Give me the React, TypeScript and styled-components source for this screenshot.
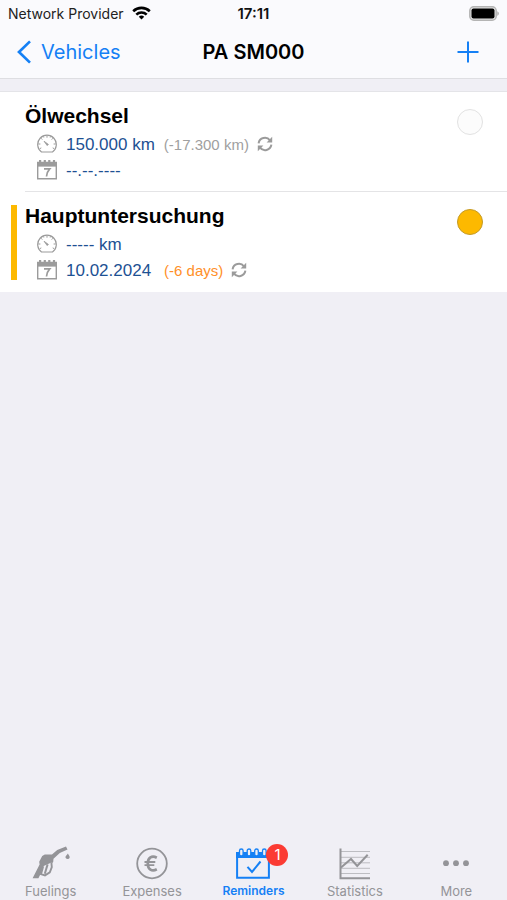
import React from "react";
import styled, { createGlobalStyle } from "styled-components";

const colors = {
  blue: "#1580f5",
  navy: "#1d5193",
  grey: "#949498",
  iconGrey: "#9b9b9b",
  amber: "#fdb900",
  orange: "#ff9029",
  page: "#f0eff5",
  bar: "#fafafd",
};

const GlobalStyle = createGlobalStyle`
  * { box-sizing: border-box; }
  body { margin: 0; background: ${colors.page}; font-family: Inter, sans-serif; }
  button { border: 0; padding: 0; background: none; font: inherit; color: inherit; cursor: pointer; }
  a { color: inherit; text-decoration: none; }
  h1, h2, ul { margin: 0; padding: 0; }
  ul { list-style: none; }
  svg { display: block; flex: none; }
`;

const Screen = styled.div`
  display: flex;
  flex-direction: column;
  min-height: 100vh;
`;

const TopBar = styled.header`
  background: ${colors.bar};
  border-bottom: 1px solid #dedee2;
`;

const StatusBar = styled.div`
  display: grid;
  grid-template-columns: 1fr auto 1fr;
  align-items: center;
  height: 26px;
  padding: 0 8px;
  font-size: 14px;
  color: #222;
`;

const Carrier = styled.div`
  display: flex;
  align-items: center;
  gap: 8px;
`;

const Clock = styled.time`
  font-size: 15px;
  font-weight: 600;
  color: #111;
`;

const BatterySlot = styled.div`
  justify-self: end;
`;

const NavBar = styled.nav`
  display: grid;
  grid-template-columns: 1fr auto 1fr;
  align-items: center;
  height: 52px;
  padding: 0 16px;
`;

const BackLink = styled.a`
  display: flex;
  align-items: center;
  gap: 9px;
  font-size: 20px;
  color: ${colors.blue};
`;

const Title = styled.h1`
  font-size: 20px;
  font-weight: 600;
  color: #000;
`;

const AddButton = styled.button`
  justify-self: end;
  padding: 0 12px;
  color: ${colors.blue};
`;

const List = styled.ul`
  margin-top: 12px;
  border-top: 1px solid #e4e4e8;
  background: #fff;
`;

const Item = styled.li`
  display: flex;
  height: 100px;
  padding-left: 11px;
`;

const DueStripe = styled.span<{ $due: boolean }>`
  width: 6px;
  height: 75px;
  margin: 13px 8px 0 0;
  background: ${(p) => (p.$due ? colors.amber : "transparent")};
`;

const ItemBody = styled.div<{ $divided: boolean }>`
  display: flex;
  flex: 1;
  justify-content: space-between;
  padding: 12px 24px 0 0;
  border-bottom: ${(p) => (p.$divided ? "1px solid #e4e4e6" : "0")};
  font-family: "Liberation Sans", Arial, sans-serif;
`;

const ItemTitle = styled.h2`
  margin-bottom: 3px;
  font-size: 21px;
  line-height: 24px;
  font-weight: 700;
  color: #000;
`;

const Detail = styled.div`
  display: flex;
  align-items: center;
  height: 26px;
  padding-left: 12px;
`;

const Value = styled.span`
  margin: 0 9px;
  font-size: 17px;
  line-height: 18px;
  padding-top: 1px;
  color: ${colors.navy};
`;

const Remaining = styled.span<{ $due: boolean }>`
  margin: 0 8px 0 ${(p) => (p.$due ? "4px" : "0")};
  font-size: 15px;
  color: ${(p) => (p.$due ? colors.orange : "#a0a0a0")};
`;

const StatusDot = styled.button<{ $due: boolean }>`
  width: 26px;
  height: 26px;
  margin-top: 5px;
  border-radius: 50%;
  border: 1px solid ${(p) => (p.$due ? "#c49a25" : "#e2e2e2")};
  background: ${(p) => (p.$due ? colors.amber : "#fcfcfc")};
`;

const TabBar = styled.nav`
  display: grid;
  grid-template-columns: repeat(5, 1fr);
  margin-top: auto;
`;

const Tab = styled.a<{ $active?: boolean }>`
  display: flex;
  flex-direction: column;
  align-items: center;
  gap: 2px;
  padding-bottom: 1px;
  font-size: ${(p) => (p.$active ? "12px" : "13px")};
  line-height: 16px;
  font-weight: ${(p) => (p.$active ? 600 : 400)};
  color: ${(p) => (p.$active ? colors.blue : colors.grey)};
`;

const TabIcon = styled.span`
  position: relative;
`;

const Badge = styled.span`
  position: absolute;
  top: -1px;
  right: -18px;
  width: 22px;
  height: 22px;
  border-radius: 50%;
  background: #fb3b33;
  color: #fff;
  font-size: 15px;
  line-height: 22px;
  font-weight: 400;
  text-align: center;
`;

const WifiIcon = () => (
  <svg width="19" height="14" viewBox="0 0 19 14" fill="none" stroke="#000" strokeWidth="2.6">
    <path d="M1.2 5.2a12 12 0 0 1 16.6 0" />
    <path d="M4.3 8.6a7.5 7.5 0 0 1 10.4 0" />
    <path d="M9.5 13.6 6.8 10.8a3.9 3.9 0 0 1 5.4 0z" fill="#000" stroke="none" />
  </svg>
);

const BatteryIcon = () => (
  <svg width="30" height="15" viewBox="0 0 30 15">
    <rect x=".8" y=".8" width="26.4" height="13.4" rx="4" fill="#e6e6e6" stroke="#b4b4b4" strokeWidth="1.5" />
    <rect x="2.5" y="2.5" width="23" height="10" rx="2" fill="#000" />
    <path d="M28.3 5.2c2 .8 2 3.8 0 4.6z" fill="#aaa" />
  </svg>
);

const ChevronIcon = () => (
  <svg width="16" height="24" viewBox="0 0 16 24" fill="none" stroke="currentColor" strokeWidth="2.7">
    <path d="M14 1.4 3 12l11 10.6" />
  </svg>
);

const PlusIcon = () => (
  <svg width="22" height="22" viewBox="0 0 22 22" stroke="currentColor" strokeWidth="2">
    <path d="M11 .5v21M.5 11h21" />
  </svg>
);

const GaugeIcon = () => (
  <svg width="20" height="20" viewBox="0 0 20 20" fill="none" stroke={colors.iconGrey} strokeWidth="1.2">
    <path d="M4.5 18A9.3 9.3 0 1 1 15.5 18z" strokeLinejoin="round" />
    <path d="M10 1.5v2.2M4 4.2l1.3 1.4M16 4.2l-1.3 1.4M1.3 10h2.1M16.6 10h2.1M2.7 14.7l1.6-.8M17.3 14.7l-1.6-.8M6.2 2.2l.6 1.3M13.8 2.2l-.6 1.3" strokeWidth="1" />
    <path d="m7 7.2 4.4 3.2-1.2 1.2z" fill={colors.iconGrey} strokeWidth=".8" />
  </svg>
);

const CalendarIcon = () => (
  <svg width="20" height="20" viewBox="0 0 20 20">
    <path d="M.7 5.5h18.6v13.3H.7z" fill="#fff" stroke={colors.iconGrey} strokeWidth="1.4" />
    <path d="M0 1.8h2V0h2.2v1.8h2.5V0h2.2v1.8h2.3V0h2.2v1.8h2.5V0h2.2v1.8H20v4.8H0z" fill={colors.iconGrey} />
    <path d="M7 8.9h5.7c-2 2.2-3 4.5-3.2 7.6" fill="none" stroke={colors.iconGrey} strokeWidth="1.7" />
  </svg>
);

const RepeatIcon = () => (
  <svg width="16" height="16" viewBox="0 0 16 16" fill="none" stroke={colors.iconGrey} strokeWidth="2">
    <path d="M1.6 7.3A6.4 6.4 0 0 1 13 4.4M14.4 8.7A6.4 6.4 0 0 1 3 11.6" />
    <path d="M15.2.8v5.6H9.6zM.8 15.2V9.6h5.6z" fill={colors.iconGrey} stroke="none" />
  </svg>
);

const NozzleIcon = () => (
  <svg width="38" height="36" viewBox="0 0 38 36">
    <path d="M.6 33.2 7.6 19.6l-.4-2.8 3-5.8 2.6-1.6 7.2.1 5.2-4.4L34 1.4l1.5 3.2-7.7 3.5-6.3 5.6-.3 3.2-2.4 2.6-6 2.2-3.4 5.6-3 5.9z" fill="currentColor" />
    <path d="m19.4 17.6.4 4.6-2 5.2-4.8 3-4-1.2 2.2-8" fill={colors.page} stroke="currentColor" strokeWidth="1.9" />
    <path d="m15.6 19.4-2.8 9.4" stroke="currentColor" strokeWidth="2" />
    <path d="M35.9 8.4c.5 1.5 2 2.5 1.8 4a2.2 2.2 0 0 1-4.3-.1c-.1-1.5 1.7-2.3 2.5-3.9z" fill="currentColor" />
  </svg>
);

const EuroIcon = () => (
  <svg width="34" height="36" viewBox="0 0 34 36" fill="none" stroke="currentColor">
    <circle cx="17" cy="18.5" r="14.8" strokeWidth="1.8" />
    <path d="M21.8 12.7c-5-2.6-9-.1-9 5.8s4 8.4 9 5.8" strokeWidth="2.7" />
    <path d="M9.5 17h10.8M9.5 20.2h9.8" strokeWidth="1.8" />
  </svg>
);

const ReminderIcon = () => (
  <svg width="34" height="36" viewBox="0 0 34 36" fill="none" stroke="currentColor">
    <path d="M1.1 12v20.8h31.8V12" strokeWidth="2" />
    <path d="M0 7h34v6H0z" fill="currentColor" stroke="none" />
    {[5.3, 13, 20.5, 28.3].map((x) => (
      <rect key={x} x={x - 1.8} y="4" width="3.6" height="7" rx="1.8" fill={colors.page} strokeWidth="1.3" />
    ))}
    <path d="m11.5 21.8 4.5 5.2 8.5-10.5" strokeWidth="2" />
  </svg>
);

const ChartIcon = () => (
  <svg width="32" height="36" viewBox="0 0 32 36" fill="none" stroke="currentColor">
    <path d="M2 6.5h29M2 12.3h29M2 17.8h29M2 23.3h29M2 28.5h29" strokeWidth="1" opacity=".55" />
    <path d="M1.5 3.5v29.8H31" strokeWidth="2" />
    <path d="m2 22.5 10-8.5 6.2 7L28.7 9.8" strokeWidth="2" />
  </svg>
);

const MoreIcon = () => (
  <svg width="28" height="36" viewBox="0 0 28 36" fill="currentColor">
    <circle cx="4" cy="18.2" r="2.9" />
    <circle cx="14" cy="18.2" r="2.9" />
    <circle cx="24" cy="18.2" r="2.9" />
  </svg>
);

type Reminder = {
  title: string;
  distance: string;
  date: string;
  distanceLeft?: string;
  timeLeft?: string;
  due: boolean;
};

const reminders: Reminder[] = [
  { title: "Ölwechsel", distance: "150.000 km", distanceLeft: "(-17.300 km)", date: "--.--.----", due: false },
  { title: "Hauptuntersuchung", distance: "----- km", date: "10.02.2024", timeLeft: "(-6 days)", due: true },
];

const tabs = [
  { label: "Fuelings", Icon: NozzleIcon },
  { label: "Expenses", Icon: EuroIcon },
  { label: "Reminders", Icon: ReminderIcon, badge: 1 },
  { label: "Statistics", Icon: ChartIcon },
  { label: "More", Icon: MoreIcon },
];

function DetailLine({ icon, value, left, due }: { icon: React.ReactNode; value: string; left?: string; due: boolean }) {
  return (
    <Detail>
      {icon}
      <Value>{value}</Value>
      {left && (
        <>
          <Remaining $due={due}>{left}</Remaining>
          <RepeatIcon />
        </>
      )}
    </Detail>
  );
}

export default function App() {
  return (
    <Screen>
      <GlobalStyle />
      <TopBar>
        <StatusBar>
          <Carrier>
            Network Provider
            <WifiIcon />
          </Carrier>
          <Clock>17:11</Clock>
          <BatterySlot>
            <BatteryIcon />
          </BatterySlot>
        </StatusBar>
        <NavBar>
          <BackLink href="#vehicles">
            <ChevronIcon />
            Vehicles
          </BackLink>
          <Title>PA SM000</Title>
          <AddButton aria-label="Add reminder">
            <PlusIcon />
          </AddButton>
        </NavBar>
      </TopBar>
      <List>
        {reminders.map((r, i) => (
          <Item key={r.title}>
            <DueStripe $due={r.due} />
            <ItemBody $divided={i < reminders.length - 1}>
              <div>
                <ItemTitle>{r.title}</ItemTitle>
                <DetailLine icon={<GaugeIcon />} value={r.distance} left={r.distanceLeft} due={r.due} />
                <DetailLine icon={<CalendarIcon />} value={r.date} left={r.timeLeft} due={r.due} />
              </div>
              <StatusDot $due={r.due} aria-label={`Status of ${r.title}`} />
            </ItemBody>
          </Item>
        ))}
      </List>
      <TabBar>
        {tabs.map(({ label, Icon, badge }) => (
          <Tab key={label} href={`#${label.toLowerCase()}`} $active={label === "Reminders"}>
            <TabIcon>
              <Icon />
              {badge && <Badge>{badge}</Badge>}
            </TabIcon>
            {label}
          </Tab>
        ))}
      </TabBar>
    </Screen>
  );
}
